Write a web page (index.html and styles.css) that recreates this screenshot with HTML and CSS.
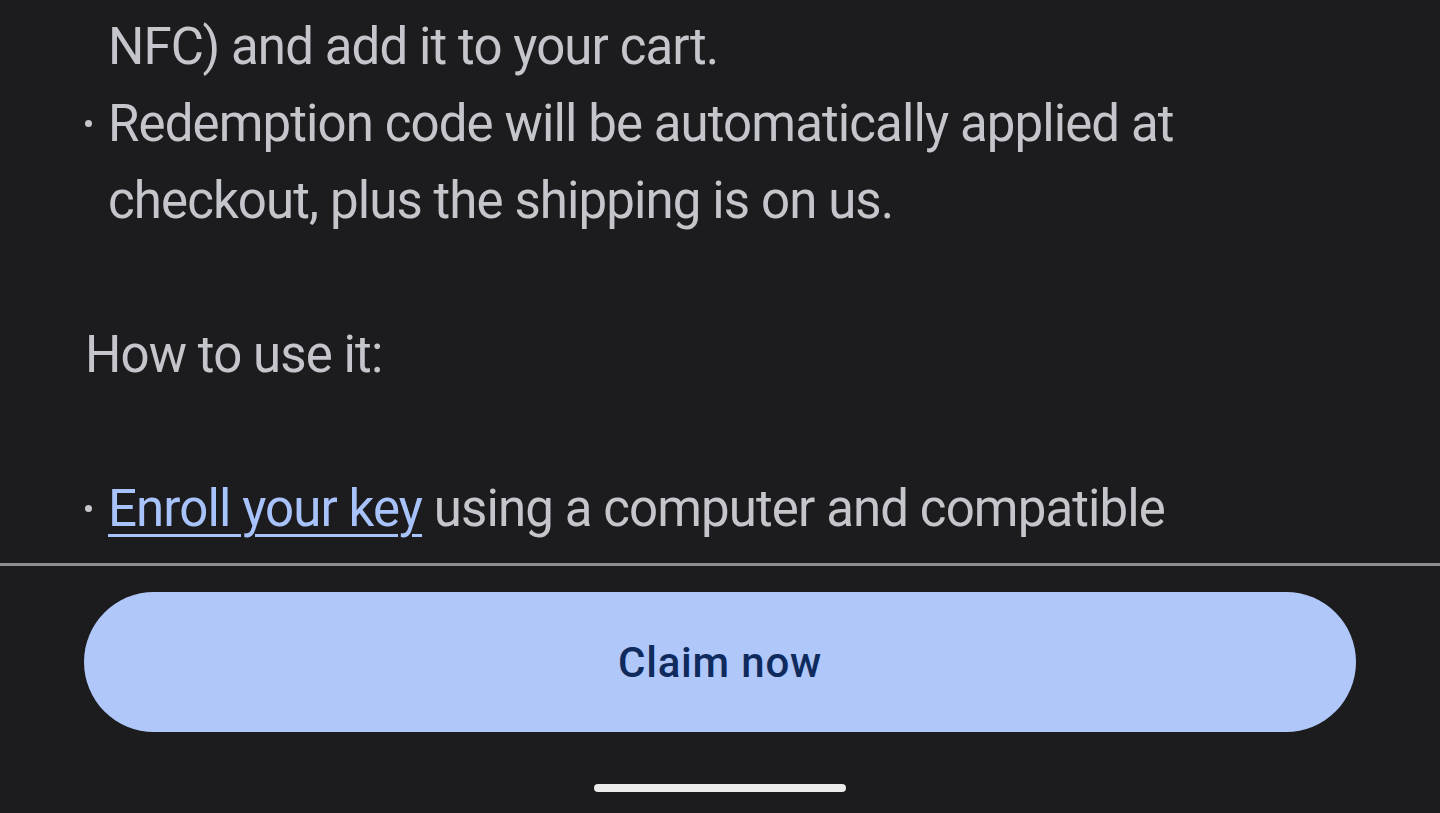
FILE: index.html
```html
<!DOCTYPE html>
<html lang="en">
<head>
<meta charset="utf-8">
<link rel="stylesheet" href="styles.css">
</head>
<body>
<div class="screen">
  <div class="scroll">
    <div class="content">
      <ul class="list first">
        <li class="cont">NFC) and add it to your cart.</li>
        <li>Redemption code will be automatically applied at checkout, plus the shipping is on us.</li>
      </ul>
      <p class="para">How to use it:</p>
      <ul class="list">
        <li><a class="link" href="#">Enroll your key</a> using a computer and compatible</li>
      </ul>
    </div>
  </div>
  <div class="divider"></div>
  <div class="footer">
    <button class="cta">Claim now</button>
  </div>
  <div class="nav">
    <div class="handle"></div>
  </div>
</div>
</body>
</html>
```

FILE: styles.css
```css
html, body {
  margin: 0;
  padding: 0;
  background: #1c1c1e;
}
.screen {
  width: 1440px;
  height: 813px;
  display: flex;
  flex-direction: column;
  background: #1c1c1e;
  overflow: hidden;
  font-family: Roboto, "Noto Sans", sans-serif;
}
.scroll {
  height: 563px;
  overflow: hidden;
  flex: none;
}
.content {
  padding: 8px 84px 0 85px;
  color: #c5c6cc;
  font-size: 51px;
  line-height: 77px;
  letter-spacing: -0.9px;
}
.list {
  list-style: none;
  margin: 0;
  padding: 0;
}
.list li {
  position: relative;
  padding-left: 23px;
}
.list li::before {
  content: "";
  position: absolute;
  left: 0;
  top: 35px;
  width: 7px;
  height: 7px;
  border-radius: 50%;
  background: #c5c6cc;
}
.list li.cont::before {
  display: none;
}
.para {
  margin: 77px 0;
}
.link {
  color: #a8c3fb;
  text-decoration: underline;
  text-decoration-thickness: 3px;
  text-underline-offset: 8px;
}
.divider {
  height: 3px;
  background: #8e8f95;
  flex: none;
}
.footer {
  padding: 26px 84px 0 84px;
  flex: none;
}
.cta {
  display: block;
  width: 100%;
  height: 140px;
  border: none;
  border-radius: 70px;
  background: #b0c7fa;
  color: #0f2b5e;
  font-family: Roboto, "Noto Sans", sans-serif;
  font-weight: 500;
  font-size: 42px;
  letter-spacing: 0.8px;
  cursor: pointer;
}
.nav {
  flex: 1;
  display: flex;
  justify-content: center;
  padding-top: 52px;
}
.handle {
  width: 252px;
  height: 8px;
  border-radius: 4px;
  background: #ececec;
}
```
